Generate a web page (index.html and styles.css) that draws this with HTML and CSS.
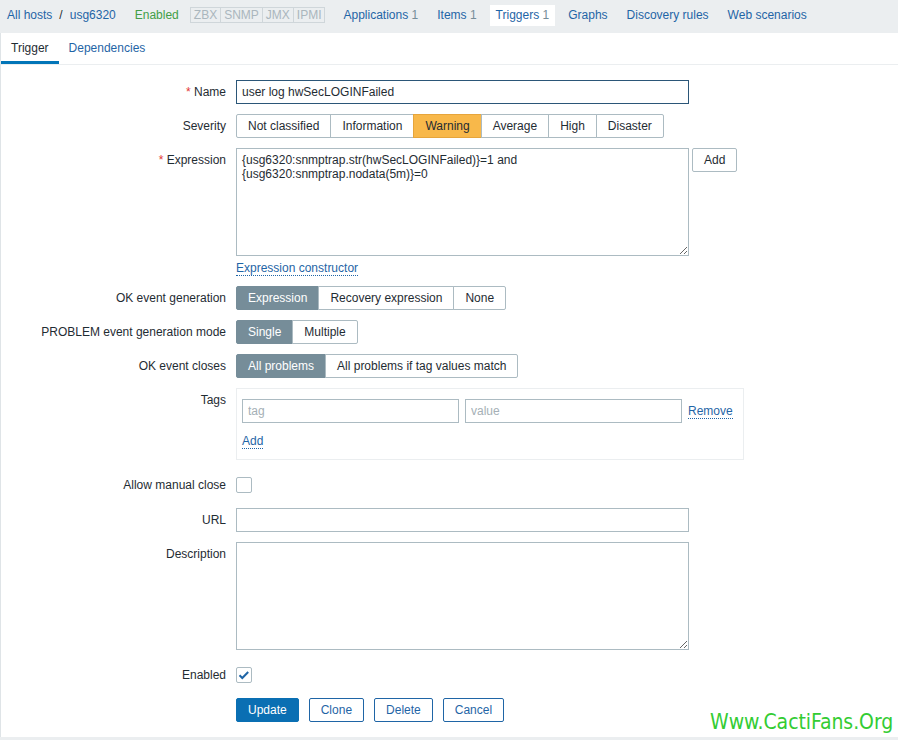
FILE: index.html
```html
<!DOCTYPE html>
<html>
<head>
<meta charset="utf-8">
<title>Trigger</title>
<link rel="stylesheet" href="styles.css">
</head>
<body>
<div class="hostnav">
  <a class="link crumb">All hosts</a><span class="sep">/</span><a class="link crumb">usg6320</a>
  <span class="status-on">Enabled</span>
  <span class="avail"><span>ZBX</span><span>SNMP</span><span>JMX</span><span>IPMI</span></span>
  <ul class="navtabs">
    <li><a class="link">Applications</a> <span class="cnt">1</span></li>
    <li><a class="link">Items</a> <span class="cnt">1</span></li>
    <li class="selected"><a class="link">Triggers</a> <span class="cnt">1</span></li>
    <li><a class="link">Graphs</a></li>
    <li><a class="link">Discovery rules</a></li>
    <li><a class="link">Web scenarios</a></li>
  </ul>
</div>
<div class="panel">
  <ul class="tabs">
    <li class="active">Trigger</li>
    <li class="link">Dependencies</li>
  </ul>
  <div class="form">
    <div class="lbl"><span class="req">*</span> Name</div>
    <div class="ctl"><input class="text wide focused" type="text" value="user log hwSecLOGINFailed"></div>

    <div class="lbl">Severity</div>
    <div class="ctl">
      <div class="seg">
        <span>Not classified</span><span>Information</span><span class="warn">Warning</span><span>Average</span><span>High</span><span>Disaster</span>
      </div>
    </div>

    <div class="lbl"><span class="req">*</span> Expression</div>
    <div class="ctl">
      <div class="exprrow">
        <textarea class="area">{usg6320:snmptrap.str(hwSecLOGINFailed)}=1 and
{usg6320:snmptrap.nodata(5m)}=0</textarea>
        <button class="btn-grey">Add</button>
      </div>
      <div class="constructor"><span class="action">Expression constructor</span></div>
    </div>

    <div class="lbl">OK event generation</div>
    <div class="ctl">
      <div class="seg"><span class="on">Expression</span><span>Recovery expression</span><span>None</span></div>
    </div>

    <div class="lbl">PROBLEM event generation mode</div>
    <div class="ctl">
      <div class="seg"><span class="on">Single</span><span>Multiple</span></div>
    </div>

    <div class="lbl">OK event closes</div>
    <div class="ctl">
      <div class="seg"><span class="on">All problems</span><span>All problems if tag values match</span></div>
    </div>

    <div class="lbl">Tags</div>
    <div class="ctl">
      <div class="tagbox">
        <div class="tagrow">
          <input class="text tag" type="text" placeholder="tag">
          <input class="text tag" type="text" placeholder="value">
          <span class="action">Remove</span>
        </div>
        <div class="addrow"><span class="action">Add</span></div>
      </div>
    </div>

    <div class="lbl mid">Allow manual close</div>
    <div class="ctl chkrow"><span class="chk"></span></div>

    <div class="lbl">URL</div>
    <div class="ctl"><input class="text wide" type="text"></div>

    <div class="lbl">Description</div>
    <div class="ctl"><textarea class="area"></textarea></div>

    <div class="lbl mid">Enabled</div>
    <div class="ctl chkrow"><span class="chk"><svg width="16" height="16" viewBox="0 0 16 16"><path d="M3.5 8.2 L6.3 11 L12.2 5" fill="none" stroke="#1f65a6" stroke-width="2"/></svg></span></div>

    <div class="lbl"></div>
    <div class="ctl buttons">
      <button class="btn-main">Update</button>
      <button class="btn-alt">Clone</button>
      <button class="btn-alt">Delete</button>
      <button class="btn-alt">Cancel</button>
    </div>
  </div>
</div>
<div class="watermark">Www.CactiFans.Org</div>
</body>
</html>
```
FILE: styles.css
```css
* { box-sizing: border-box; }
html, body { margin: 0; padding: 0; }
body {
  background: #ebeef0;
  font-family: "Liberation Sans", Arial, sans-serif;
  font-size: 12px;
  color: #1f2c33;
  width: 898px;
  height: 740px;
  overflow: hidden;
  position: relative;
}
.link { color: #1f65a6; text-decoration: none; }

/* host navigation */
.hostnav {
  height: 33px;
  display: flex;
  align-items: flex-start;
  padding: 5px 0 0 7px;
  line-height: 21px;
  white-space: nowrap;
}
.sep { padding: 0 7px; color: #1f2c33; }
.status-on { color: #429e47; margin-left: 19px; }
.avail {
  display: flex;
  margin: 2px 0 0 11px;
  border: 1px solid #cfd6da;
  line-height: 14px;
}
.avail span {
  padding: 0 3px;
  color: #aab6bd;
  border-left: 1px solid #cfd6da;
}
.avail span:first-child { border-left: 0; }
.navtabs {
  display: flex;
  list-style: none;
  margin: 0 0 0 12px;
  padding: 0;
  gap: 7px;
}
.navtabs li { padding: 0 6px; }
.navtabs li.selected { background: #fff; }
.cnt { color: #768d99; }

/* panel */
.panel {
  background: #fff;
  border-left: 1px solid #dfe4e7;
}
.tabs {
  display: flex;
  list-style: none;
  margin: 0;
  padding: 0;
  height: 32px;
  border-bottom: 1px solid #ebeef0;
}
.tabs li {
  height: 31px;
  padding: 2px 10px 0;
  line-height: 26px;
  border-bottom: 3px solid transparent;
}
.tabs li.active { border-bottom-color: #0275b8; color: #1f2c33; }

.form {
  display: grid;
  grid-template-columns: 225px 1fr;
  column-gap: 10px;
  row-gap: 10px;
  padding: 15px 0 15px;
}
.lbl {
  text-align: right;
  line-height: 24px;
  white-space: nowrap;
}
.lbl.mid { line-height: 26px; padding-top: 2px; }
.req { color: #e33734; }
.ctl { min-height: 24px; }

input.text {
  height: 24px;
  border: 1px solid #acbbc2;
  padding: 0 5px;
  font: inherit;
  color: #1f2c33;
  background: #fff;
  outline: none;
  display: block;
}
input.text::placeholder { color: #a5b0b6; }
input.wide { width: 453px; }
input.focused { border-color: #2b5678; }

textarea.area {
  display: block;
  width: 453px;
  height: 108px;
  border: 1px solid #acbbc2;
  padding: 4px 5px;
  font: inherit;
  line-height: 14px;
  color: #1f2c33;
  resize: both;
  margin: 0;
}

.seg { display: flex; }
.seg span {
  display: block;
  height: 24px;
  line-height: 22px;
  padding: 0 11px;
  border: 1px solid #acbbc2;
  margin-left: -1px;
  background: #fff;
  white-space: nowrap;
}
.seg span:first-child { margin-left: 0; border-radius: 2px 0 0 2px; }
.seg span:last-child { border-radius: 0 2px 2px 0; }
.seg span.warn { background: #f8b84a; border-color: #e6a53c; }
.seg span.on { background: #768d99; border-color: #768d99; color: #fff; }

.exprrow { display: flex; align-items: flex-start; gap: 3px; }
button {
  font: inherit;
  height: 24px;
  padding: 0 11px;
  border-radius: 2px;
  cursor: pointer;
  margin: 0;
}
.btn-grey {
  background: #fff;
  border: 1px solid #acbbc2;
  color: #1f2c33;
}
.constructor { margin-top: 5px; line-height: 15px; }
.action {
  color: #1f65a6;
  border-bottom: 1px dotted #1f65a6;
}

.tagbox {
  width: 508px;
  border: 1px solid #ebeef0;
  padding: 10px 5px 6px;
}
.tagrow { display: flex; align-items: center; gap: 6px; }
input.tag { width: 217px; }
.addrow { margin-top: 6px; height: 24px; line-height: 24px; }
.addrow .action { line-height: 14px; display: inline-block; }

.chkrow { height: 28px; display: flex; align-items: flex-start; padding-top: 7px; }
.chk {
  display: block;
  width: 16px;
  height: 16px;
  border: 1px solid #acbbc2;
  border-radius: 2px;
  background: #fff;
  position: relative;
}
.chk svg { position: absolute; left: -1px; top: -1px; }

.buttons { display: flex; gap: 10px; }
.btn-main {
  background: #0a6fb3;
  border: 1px solid #0a6fb3;
  color: #fff;
}
.btn-alt {
  background: #fff;
  border: 1px solid #1f65a6;
  color: #1f65a6;
}

.watermark {
  position: absolute;
  left: 710px;
  top: 710px;
  font-family: "DejaVu Sans Condensed", "DejaVu Sans", sans-serif;
  font-size: 21px;
  line-height: 24px;
  letter-spacing: -0.05px;
  color: #33cc33;
  white-space: nowrap;
}
```
